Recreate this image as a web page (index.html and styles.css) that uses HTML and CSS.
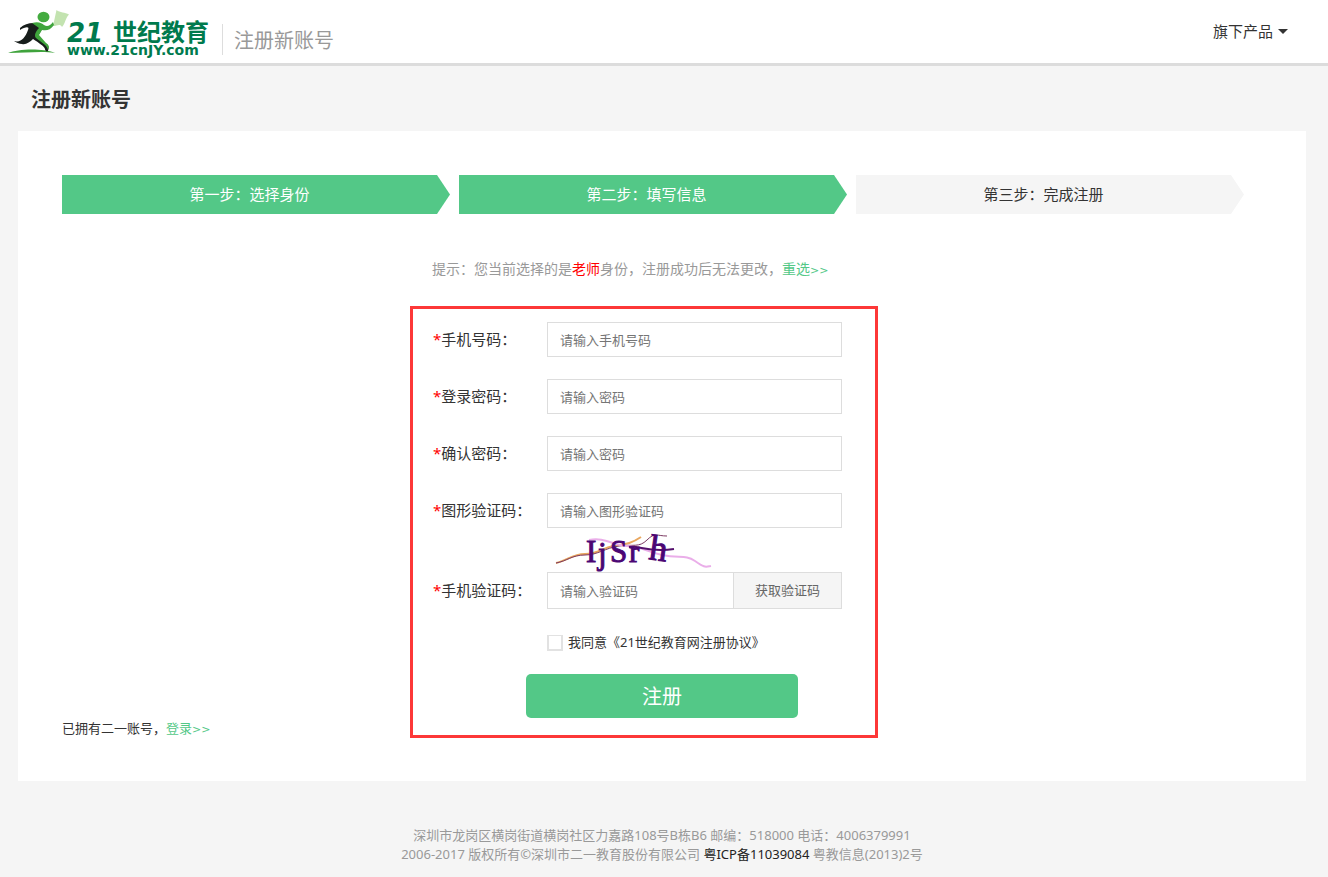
FILE: index.html
```html
<!DOCTYPE html>
<html lang="zh-CN">
<head>
<meta charset="utf-8">
<title>注册新账号</title>
<link rel="stylesheet" href="styles.css">
</head>
<body>
<header class="header">
  <svg class="logo" width="204" height="54" viewBox="8 6 204 54" role="img" aria-label="21世纪教育">
    <path d="M8 53 C18 49 42 48 55 53 C42 51 26 53 8 53Z" fill="#3fa33c"/>
    <path d="M53 26 L56.500 10 C60 13 65 12 69 14.500 C66 17 65 24 62 27 C60 23 57 26 53 26Z" fill="#c3e3b0"/>
    <path d="M20 28 C25 23 34 22 39 24 L42 29 L37 38 L45 43 C49 45 49 47 48 51 C47 52 45 51 45 49 C44 46 39 43 33 39 C30 42 26 45 22 44 C19 44 16 42 14 41 C21 43 25 38 28 30 C30 26 25 27 20 30Z" fill="#171d1b"/>
    <path d="M32 23 C38 21 42 23 44 25 C47 27 50 26 53 22 L54 25 C50 30 47 31 42 30 L39 35 L46 43 C50 46 49 48 48 50 C47 45 42 43 36 38 C34 36 35 32 39 28Z" fill="#3fa53c"/>
    <ellipse cx="43.500" cy="17" rx="6" ry="5.200" fill="#44ab40"/>
    <text class="logo-number" x="67" y="42">21</text>
    <text class="logo-name" x="113" y="41">世纪教育</text>
    <text class="logo-url" x="67" y="55">www.21cnJY.com</text>
  </svg>
  <span class="header-title">注册新账号</span>
  <button class="products" type="button">旗下产品<span class="caret"></span></button>
</header>
<main class="main">
  <h1 class="page-title">注册新账号</h1>
  <section class="card">
    <ol class="steps">
      <li class="step step-on">第一步：选择身份</li>
      <li class="step step-on">第二步：填写信息</li>
      <li class="step">第三步：完成注册</li>
    </ol>
    <div class="content">
      <p class="hint">提示：您当前选择的是<span class="role">老师</span>身份，注册成功后无法更改，<a class="link" href="#">重选<span class="arrows">&gt;&gt;</span></a></p>
      <p class="login">已拥有二一账号，<a class="link" href="#">登录<span class="arrows">&gt;&gt;</span></a></p>
      <form class="form">
        <div class="row">
          <label class="label" for="phone"><span class="star">*</span>手机号码：</label>
          <input class="field" id="phone" type="tel" placeholder="请输入手机号码">
        </div>
        <div class="row">
          <label class="label" for="password"><span class="star">*</span>登录密码：</label>
          <input class="field" id="password" type="password" placeholder="请输入密码">
        </div>
        <div class="row">
          <label class="label" for="confirm"><span class="star">*</span>确认密码：</label>
          <input class="field" id="confirm" type="password" placeholder="请输入密码">
        </div>
        <div class="row row-captcha">
          <label class="label" for="captcha"><span class="star">*</span>图形验证码：</label>
          <input class="field" id="captcha" type="text" placeholder="请输入图形验证码">
        </div>
        <svg class="captcha" width="170" height="44" viewBox="0 0 170 44" role="img" aria-label="图形验证码">
          <path d="M9 35 C20 33 25 26 38 26 S55 20 66 18 S82 17 94 9" fill="none" stroke="#e9a75f" stroke-width="2"/>
          <path d="M9 35 C20 33 25 27 38 27 S58 20 72 18 S92 20 100 12 S110 8 120 8" fill="none" stroke="#7c3a62" stroke-width="1"/>
          <path d="M42 12 C58 9 65 17 80 18 S98 23 115 27 S138 26 148 33 S158 39 164 38" fill="none" stroke="#eaaee9" stroke-width="2"/>
          <path d="M82 19 C92 17 101 25 127 21" fill="none" stroke="#54106c" stroke-width="2"/>
          <g class="captcha-text">
            <text x="39" y="34">I</text>
            <text x="51" y="36">j</text>
            <text x="63" y="34">S</text>
            <text x="82" y="34">r</text>
            <text class="captcha-tall" x="101" y="31" transform="rotate(8 101 31)">h</text>
          </g>
        </svg>
        <div class="row">
          <label class="label" for="code"><span class="star">*</span>手机验证码：</label>
          <div class="code">
            <input class="field code-field" id="code" type="text" placeholder="请输入验证码">
            <button class="code-button" type="button">获取验证码</button>
          </div>
        </div>
        <label class="agree"><input class="check" type="checkbox">我同意《21世纪教育网注册协议》</label>
        <button class="submit" type="submit">注册</button>
      </form>
    </div>
  </section>
</main>
<footer class="footer">
  <p class="line">深圳市龙岗区横岗街道横岗社区力嘉路108号B栋B6 邮编：518000 电话：4006379991</p>
  <p class="line">2006-2017 版权所有©深圳市二一教育股份有限公司 <a class="icp" href="#">粤ICP备11039084</a> 粤教信息(2013)2号</p>
</footer>
</body>
</html>
```
FILE: styles.css
```css
* {
  box-sizing: border-box;
}

body {
  margin: 0;
  background: #f5f5f5;
  color: #333;
  font: 13px/19px "Noto Sans", "Noto Sans CJK SC", sans-serif;
}

button,
input {
  font: inherit;
  color: inherit;
  margin: 0;
}

p {
  margin: 0;
}

a {
  text-decoration: none;
}

.header {
  display: flex;
  align-items: flex-start;
  padding: 6px 40px 3px 8px;
  background: #fff;
  border-bottom: 3px solid #dcdcdc;
}

.logo {
  flex: none;
}

.logo-number {
  font: italic bold 26px "DejaVu Sans", sans-serif;
  fill: #007a4d;
}

.logo-name {
  font: bold 24px "Noto Sans CJK SC", sans-serif;
  fill: #007a4d;
}

.logo-url {
  font: bold 14px "DejaVu Sans", sans-serif;
  fill: #007a4d;
}

.header-title {
  margin: 18px 0 0 10px;
  padding: 2px 0 0 11px;
  border-left: 1px solid #ddd;
  color: #999;
  font-size: 20px;
  line-height: 29px;
}

.products {
  display: flex;
  align-items: center;
  gap: 5px;
  margin: 14px 0 0 auto;
  padding: 0;
  border: 0;
  background: none;
  font-size: 15px;
  line-height: 22px;
}

.caret {
  border: 5px solid transparent;
  border-top-color: #333;
  border-bottom: 0;
}

.main {
  padding: 19px 22px 0 18px;
}

.page-title {
  margin: 0 0 16px 13px;
  font-size: 20px;
  line-height: 30px;
}

.card {
  padding: 44px 0 43px 44px;
  background: #fff;
}

.steps {
  display: grid;
  grid-template-columns: repeat(3, 1fr);
  gap: 9px;
  margin: 0;
  padding: 0 62px 0 0;
  list-style: none;
}

.step {
  padding-right: 13px;
  background: #f5f5f5;
  clip-path: polygon(0 0, calc(100% - 13px) 0, 100% 50%, calc(100% - 13px) 100%, 0 100%);
  font-size: 15px;
  line-height: 39px;
  text-align: center;
}

.step-on {
  background: #53c887;
  color: #fff;
}

.content {
  display: grid;
  grid-template-columns: 1fr 468px 1fr;
  align-items: end;
  padding: 44px 80px 0 0;
}

.hint {
  grid-column: 2;
  padding-left: 22px;
  margin-bottom: 26px;
  color: #999;
  font-size: 14px;
  line-height: 22px;
  white-space: nowrap;
}

.role,
.star {
  color: #f00;
}

.link {
  color: #53c887;
}

.arrows {
  font-family: "DejaVu Sans", sans-serif;
  font-size: 11px;
  line-height: 11px;
}

.login {
  grid-column: 1;
}

.form {
  display: flex;
  flex-direction: column;
  padding: 13px 33px 17px 20px;
  border: 3px solid #fd3838;
}

.row {
  display: grid;
  grid-template-columns: 114px 1fr;
  align-items: center;
  margin-bottom: 22px;
}

.row-captcha {
  margin-bottom: 0;
}

.label {
  font-size: 15px;
}

.field {
  width: 100%;
  height: 35px;
  padding: 0 12px;
  border: 1px solid #ddd;
  border-radius: 0;
  background: #fff;
}

.field::placeholder {
  color: #757575;
}

.captcha {
  margin-left: 114px;
}

.captcha-text {
  font: 31px "Liberation Serif", serif;
  fill: #4b0674;
  stroke: #4b0674;
}

.captcha-tall {
  font-size: 36px;
}

.code {
  display: flex;
}

.code-field {
  flex: 1;
  min-width: 0;
  height: 37px;
}

.code-button {
  width: 108px;
  padding: 0;
  border: 1px solid #ddd;
  border-left: 0;
  background: #f5f5f5;
  color: #666;
}

.agree {
  display: flex;
  align-items: center;
  gap: 5px;
  margin: 2px 0 22px 114px;
}

.check {
  appearance: none;
  width: 16px;
  height: 16px;
  border: 2px solid #e2e2e2;
  border-top-width: 1px;
  background: #fff;
}

.submit {
  width: 272px;
  margin-left: 93px;
  padding: 2px 0 0;
  border: 0;
  border-radius: 5px;
  background: #53c887;
  color: #fff;
  font-size: 20px;
  line-height: 42px;
}

.footer {
  padding: 45px 4px 12px 0;
  color: #999;
  text-align: center;
}

.icp {
  color: #222;
}
```
